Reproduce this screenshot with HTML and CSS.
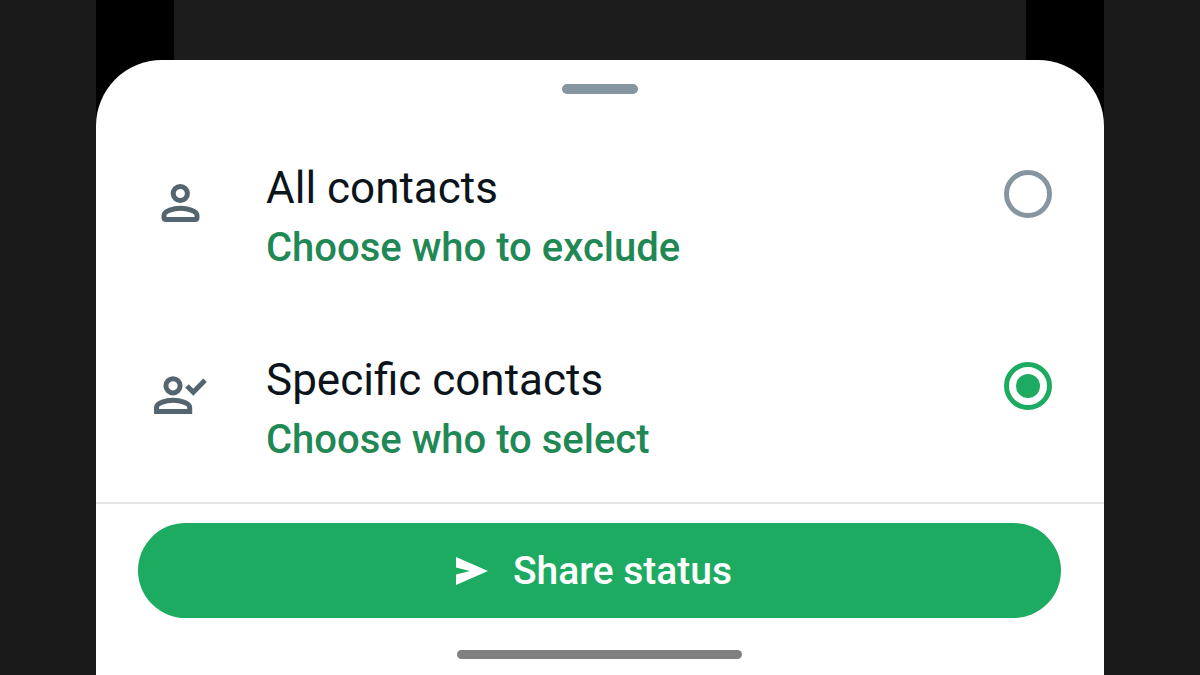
FILE: index.html
```html
<!DOCTYPE html>
<html lang="en">
<head>
  <meta charset="UTF-8">
  <meta name="viewport" content="width=device-width, initial-scale=1.0">
  <title>Share status</title>
  <link rel="stylesheet" href="styles.css">
</head>
<body>
  <div class="phone">
    <div class="photo"></div>
    <form class="sheet">
      <div class="handle"></div>

      <div class="options">
        <div class="option">
          <svg class="icon" viewBox="0 0 56 56" aria-hidden="true">
            <circle cx="28.3" cy="18.5" r="7.1"/>
            <path d="M12 40.5C12 35.5 22 33.3 28.5 33.3S45 35.5 45 40.5V42.5Q45 44.5 43 44.5H14Q12 44.5 12 42.5Z"/>
          </svg>
          <div class="text">
            <label class="title" for="all">All contacts</label>
            <a class="link" href="#">Choose who to exclude</a>
          </div>
          <input class="radio" type="radio" name="audience" id="all">
        </div>

        <div class="option">
          <svg class="icon" viewBox="0 0 56 56" aria-hidden="true">
            <circle cx="21" cy="18.8" r="7.1"/>
            <path d="M4.5 44.5V40.5C4.5 35.5 14.5 33.3 21 33.3S37.7 35.5 37.7 40.5V44.5Z"/>
            <path d="M35 19L41.3 25.3L53 13.3"/>
          </svg>
          <div class="text">
            <label class="title" for="specific">Specific contacts</label>
            <a class="link" href="#">Choose who to select</a>
          </div>
          <input class="radio" type="radio" name="audience" id="specific" checked>
        </div>
      </div>

      <div class="footer">
        <button class="share" type="button">
          <svg class="send" viewBox="0 0 34 30" aria-hidden="true">
            <path d="M1 1L33 15L1 29V18.5L15 15L1 11.5Z"/>
          </svg>
          Share status
        </button>
        <div class="nav-bar"></div>
      </div>
    </form>
  </div>
</body>
</html>
```

FILE: styles.css
```css
* {
  box-sizing: border-box;
}
body {
  margin: 0;
  background: #191919;
  font-family: Roboto, sans-serif;
}
.phone {
  display: flex;
  flex-direction: column;
  width: 84%;
  min-height: 100vh;
  margin: 0 auto;
  background: #000;
}
.photo {
  height: 60px;
  margin: 0 78px;
  background: #1c1c1c;
}
.sheet {
  flex: 1;
  padding-top: 24px;
  border-radius: 66px 66px 0 0;
  background: #fff;
}
.handle {
  width: 76px;
  height: 10px;
  margin: 0 auto;
  border-radius: 5px;
  background: #8696a0;
}
.options {
  display: grid;
  gap: 72px;
  padding: 64px 52px 32px 56px;
}
.option {
  display: flex;
  align-items: flex-start;
}
.icon {
  width: 56px;
  height: 56px;
  margin: 17px 58px 0 0;
  fill: none;
  stroke: #54656f;
  stroke-width: 5;
}
.text {
  flex: 1;
  display: flex;
  flex-direction: column;
  align-items: flex-start;
}
.title {
  font-size: 44px;
  line-height: 60px;
  color: #0b141a;
}
.link {
  font-size: 40px;
  font-weight: 500;
  line-height: 60px;
  color: #1f8855;
  text-decoration: none;
}
.radio {
  appearance: none;
  width: 48px;
  height: 48px;
  margin: 12px 0 0;
  border: 5px solid #8696a0;
  border-radius: 50%;
}
.radio:checked {
  padding: 7px;
  border-color: #1dab61;
  background: #1dab61 content-box;
}
.footer {
  padding: 19px 43px 16px 42px;
  border-top: 2px solid #e4e6e7;
}
.share {
  display: flex;
  align-items: center;
  justify-content: center;
  gap: 24px;
  width: 100%;
  height: 95px;
  padding: 0 12px 0 0;
  border: none;
  border-radius: 48px;
  background: #1dab61;
  color: #fff;
  font-family: inherit;
  font-size: 39px;
  font-weight: 500;
  cursor: pointer;
}
.send {
  width: 34px;
  height: 30px;
  fill: #fff;
}
.nav-bar {
  width: 285px;
  height: 9px;
  margin: 32px auto 0;
  border-radius: 5px;
  background: #808080;
}
```
